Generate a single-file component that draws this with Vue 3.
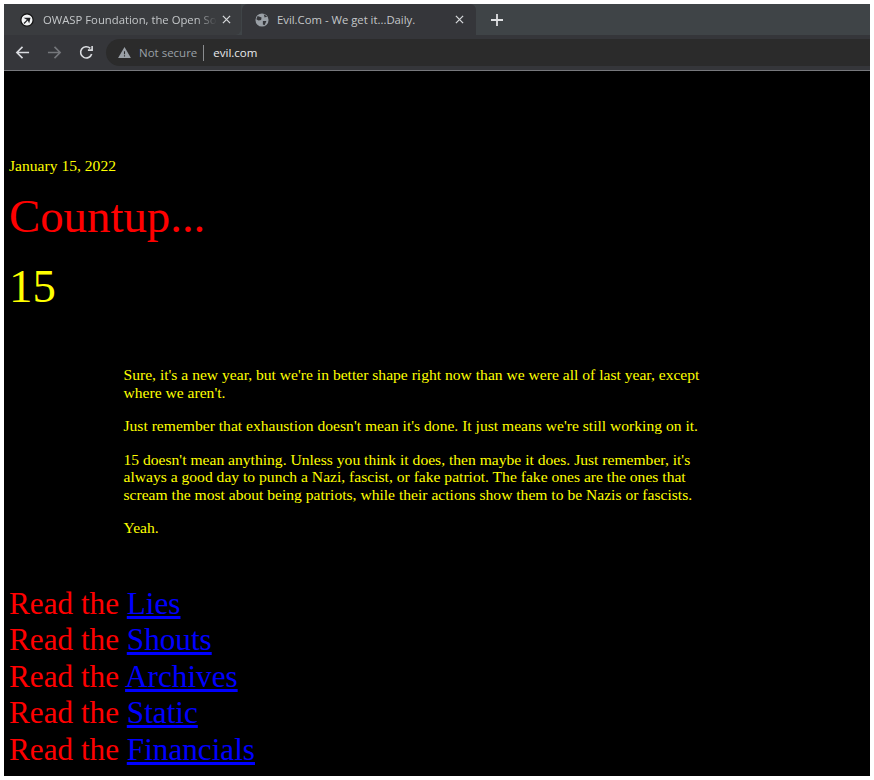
<template>
  <div class="shot">
    <div class="browser">
      <div class="tabstrip">
        <div class="tab tab-first">
          <svg class="favicon" viewBox="0 0 16 16">
            <circle cx="8" cy="8" r="7" fill="#f1f3f4" stroke="#111" stroke-width="1.4" />
            <path d="M4 5.5H12L10.5 12 8.8 8.2Z" fill="#202124" />
            <path d="M9 7.5 4.5 12" stroke="#202124" stroke-width="1.4" />
          </svg>
          <span class="tab-title">OWASP Foundation, the Open Source</span>
          <svg class="tab-close" viewBox="0 0 10 10"><path d="M1 1 9 9M9 1 1 9" /></svg>
        </div>
        <div class="tab tab-second">
          <svg class="favicon" viewBox="0 0 16 16">
            <circle cx="8" cy="8" r="7.5" fill="#9aa0a6" />
            <path d="M3 3.5 7.5 5 7 8 4 8.5 1.5 7ZM9 9 13 9 11 14 9 13ZM10 1.5 14 4 11 5Z" fill="#35363a" />
          </svg>
          <span class="tab-title">Evil.Com - We get it...Daily.</span>
          <svg class="tab-close" viewBox="0 0 10 10"><path d="M1 1 9 9M9 1 1 9" /></svg>
        </div>
        <svg class="new-tab" viewBox="0 0 12 12"><path d="M6 0V12M0 6H12" /></svg>
      </div>
      <div class="toolbar">
        <svg class="nav" viewBox="0 0 16 16"><path d="M15 8H2M8 2 2 8l6 6" /></svg>
        <svg class="nav nav-off" viewBox="0 0 16 16"><path d="M1 8H14M8 2l6 6-6 6" /></svg>
        <svg class="nav" viewBox="0 0 16 16"><path d="M13.5 9.5A6 6 0 1 1 12 3.6M14 1v4.5H9.5" /></svg>
        <div class="omnibox">
          <svg class="warn" viewBox="0 0 14 12"><path d="M7 0 14 12H0Z" fill="#9aa0a6" /><path d="M7 4.5V8M7 9v1.4" stroke="#2b2b2b" stroke-width="1.2" /></svg>
          <span class="not-secure">Not secure</span>
          <span class="divider"></span>
          <span class="url">evil.com</span>
        </div>
      </div>
    </div>

    <main class="page">
      <div class="date">January 15, 2022</div>
      <div class="countup">Countup...</div>
      <div class="number">15</div>
      <div class="message">
        <p v-for="para in paragraphs" :key="para">{{ para }}</p>
      </div>
      <div class="links">
        <div v-for="link in links" :key="link">Read the <a href="#">{{ link }}</a></div>
      </div>
    </main>
  </div>
</template>

<script setup>
const paragraphs = [
  "Sure, it's a new year, but we're in better shape right now than we were all of last year, except where we aren't.",
  "Just remember that exhaustion doesn't mean it's done. It just means we're still working on it.",
  "15 doesn't mean anything. Unless you think it does, then maybe it does. Just remember, it's always a good day to punch a Nazi, fascist, or fake patriot. The fake ones are the ones that scream the most about being patriots, while their actions show them to be Nazis or fascists.",
  'Yeah.'
]

const links = ['Lies', 'Shouts', 'Archives', 'Static', 'Financials']
</script>

<style>
html,
body {
  margin: 0;
  background: #fff;
}
</style>

<style scoped>
.shot {
  width: 866px;
  height: 772px;
  margin: 4px;
  overflow: hidden;
  background: #000;
  display: flex;
  flex-direction: column;
}

.browser {
  flex-shrink: 0;
  font-family: 'Open Sans', 'Noto Sans', sans-serif;
}

.tabstrip {
  height: 31px;
  background: #3f4447;
  display: flex;
  align-items: center;
}

.tab {
  height: 31px;
  box-sizing: border-box;
  background: #35363a;
  display: flex;
  align-items: center;
  flex-shrink: 0;
}

.tab-first {
  width: 237px;
  padding: 0 10px 0 16px;
  background: #3a3c3f;
  border-radius: 0 0 6px 0;
}

.tab-second {
  width: 234px;
  margin-left: 1px;
  padding: 0 12px 0 13px;
  border-radius: 6px 6px 0 0;
}

.favicon {
  width: 14px;
  height: 14px;
  margin-right: 9px;
  flex-shrink: 0;
}

.tab-second .favicon {
  margin-right: 8px;
}

.tab-title {
  flex: 1;
  min-width: 0;
  white-space: nowrap;
  overflow: hidden;
  font-size: 11.3px;
  color: #c4c7c9;
}

.tab-first .tab-title {
  -webkit-mask-image: linear-gradient(90deg, #000 88%, transparent);
  mask-image: linear-gradient(90deg, #000 88%, transparent);
}

.tab-close {
  width: 9px;
  height: 9px;
  flex-shrink: 0;
  margin-left: 5px;
}

.tab-close path {
  stroke: #d7d9db;
  stroke-width: 1.4;
  fill: none;
}

.new-tab {
  width: 12px;
  height: 12px;
  margin-left: 15px;
}

.new-tab path {
  stroke: #dfe1e3;
  stroke-width: 1.8;
  fill: none;
}

.toolbar {
  height: 36px;
  background: #35363a;
  border-bottom: 1px solid #77787c;
  display: flex;
  align-items: center;
  padding-left: 11px;
  box-sizing: border-box;
}

.nav {
  width: 15px;
  height: 15px;
  margin-right: 17px;
  flex-shrink: 0;
}

.nav path {
  stroke: #dadce0;
  stroke-width: 1.7;
  fill: none;
}

.nav-off path {
  stroke: #75777b;
}

.omnibox {
  flex: 1;
  height: 27px;
  margin-left: -5px;
  padding-left: 12px;
  border-radius: 14px 0 0 14px;
  background: #2b2b2b;
  display: flex;
  align-items: center;
  font-size: 11.5px;
}

.warn {
  width: 13px;
  height: 11px;
  margin-right: 8px;
}

.not-secure {
  color: #9aa0a6;
}

.divider {
  width: 1px;
  height: 16px;
  margin: 0 9px 0 6px;
  background: #8a8c8f;
}

.url {
  color: #e8eaed;
}

.page {
  flex: 1;
  padding: 86px 0 0 5px;
  font-family: 'Liberation Serif', 'Times New Roman', serif;
  font-size: 15.6px;
  color: #ff0;
}

.date {
  line-height: 18px;
}

.countup {
  margin-top: 14px;
  font-size: 46.8px;
  line-height: 54px;
  color: #f00;
}

.number {
  margin-top: 16px;
  font-size: 46.8px;
  line-height: 54px;
}

.message {
  width: 590px;
  margin: 53px 0 0 114.5px;
  line-height: 17.6px;
}

.message p {
  margin: 0 0 15.9px;
}

.links {
  margin-top: 49px;
  font-size: 31.2px;
  line-height: 36.5px;
  color: #f00;
}

.links a {
  color: #00f;
}
</style>
